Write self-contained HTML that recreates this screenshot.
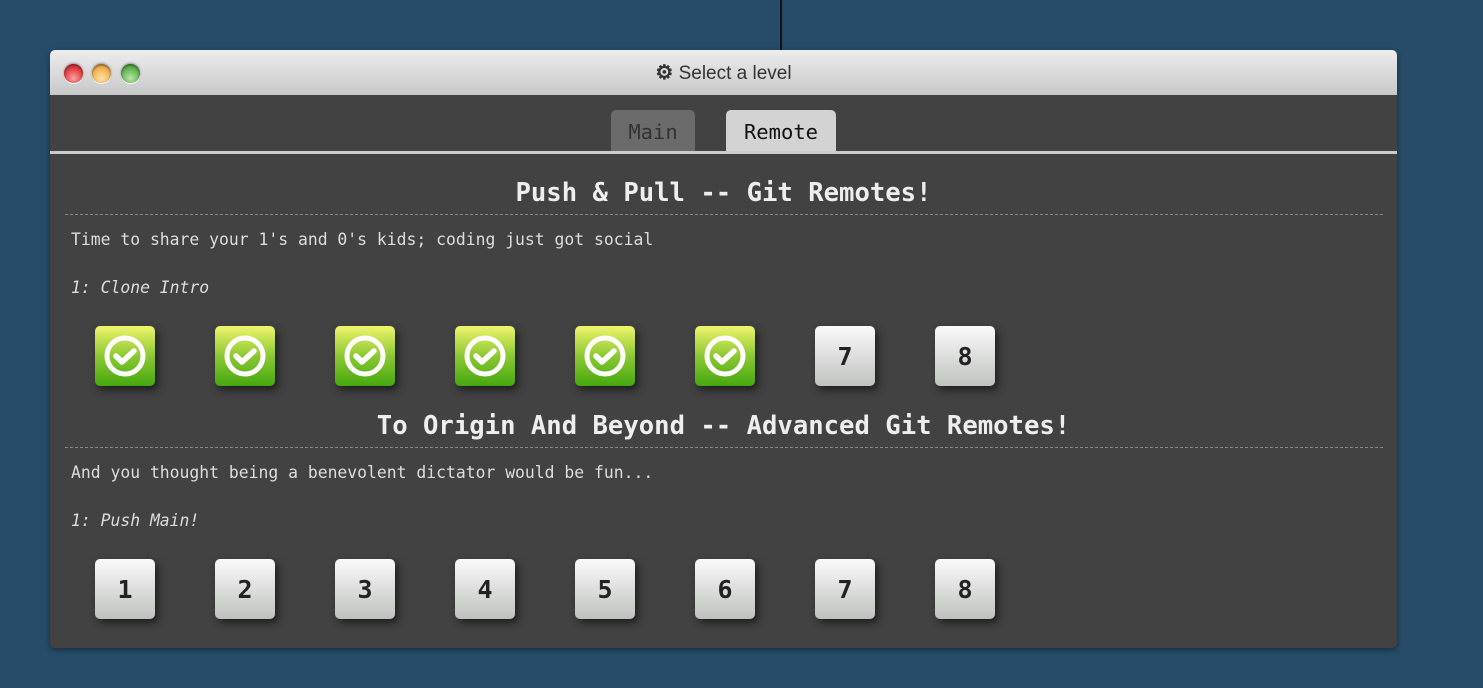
<!DOCTYPE html>
<html><head><style>
body{margin:0;width:1483px;height:688px;background:#264c68;position:relative;overflow:hidden;font-family:"DejaVu Sans Mono","Liberation Mono",monospace}
.vl{position:absolute;left:780px;top:0;width:2px;height:50px;background:#111}
.win{position:absolute;left:50px;top:50px;width:1347px;height:598px;background:#424242;border-radius:5px;box-shadow:0 2px 6px rgba(0,0,0,.4);overflow:hidden}
.tb{height:45px;background:linear-gradient(#ededed,#c8c8c8);position:relative;font-family:"Liberation Sans",sans-serif;font-size:19px;color:#333;text-align:center;line-height:46px}
.dot{position:absolute;top:14px;width:19px;height:19px;border-radius:50%;box-shadow:0 1px 0 #fff,0 -1px 2px rgba(0,0,0,.35),inset 0 1px 2px rgba(0,0,0,.5)}
.tab{position:absolute;top:60px;height:41px;border-radius:5px 5px 0 0;font-size:20.5px;line-height:44px;text-align:center}
.sep{position:absolute;left:0;top:101px;width:100%;height:3px;background:#ccc}
h2{position:absolute;left:0;width:100%;margin:0;text-align:center;color:#eee;font-size:25.6px;font-weight:bold}
.dash{position:absolute;left:15px;width:1318px;border-top:1px dashed #888}
.t{position:absolute;left:21px;color:#ddd;font-size:16.4px}
.i{font-style:italic}
.b{position:absolute;width:60px;height:60px;border-radius:5px;box-shadow:3px 4px 8px rgba(0,0,0,.55);text-align:center;line-height:62px;font-size:25px;font-weight:bold;color:#222;background:linear-gradient(#fafafa,#bfc2bf)}
.g{background:linear-gradient(#eef56a,#8cc833 50%,#45a80e)}
.g svg{margin-top:8px}
</style></head><body>
<div class="vl"></div>
<div class="win">
<div class="tb">
<div class="dot" style="left:14px;background:radial-gradient(circle at 50% 75%,#f9a0a0,#e0383e 60%,#b82a2e)"></div>
<div class="dot" style="left:42px;background:radial-gradient(circle at 50% 75%,#fde0a0,#f0b050 60%,#c8862a)"></div>
<div class="dot" style="left:71px;background:radial-gradient(circle at 50% 75%,#b5e6a8,#5fb14d 60%,#3c8a30)"></div>
<b style="font-size:20px">⚙</b> Select a level</div>
<div class="tab" style="left:561px;width:84px;background:#6b6b6b;color:#333">Main</div>
<div class="tab" style="left:676px;width:110px;background:#d3d3d3;color:#111">Remote</div>
<div class="sep"></div>
<h2 style="top:128px">Push &amp; Pull -- Git Remotes!</h2>
<div class="dash" style="top:164px"></div>
<div class="t" style="top:180px">Time to share your 1's and 0's kids; coding just got social</div>
<div class="t i" style="top:228px">1: Clone Intro</div>
<h2 style="top:361px">To Origin And Beyond -- Advanced Git Remotes!</h2>
<div class="dash" style="top:397px"></div>
<div class="t" style="top:413px">And you thought being a benevolent dictator would be fun...</div>
<div class="t i" style="top:461px">1: Push Main!</div>
</div>
<script>
var w=document.querySelector('.win'),h='';
var ck='<svg width="44" height="44" viewBox="0 0 44 44"><circle cx="22" cy="22" r="18" fill="none" stroke="#fff" stroke-width="5"/><path d="M13 22l6 6 12-11" fill="none" stroke="#fff" stroke-width="5.5" stroke-linecap="round" stroke-linejoin="round"/></svg>';
for(var i=0;i<8;i++){var x=45+120*i;
h+=i<6?'<div class="b g" style="left:'+x+'px;top:276px">'+ck+'</div>':'<div class="b" style="left:'+x+'px;top:276px">'+(i+1)+'</div>';
h+='<div class="b" style="left:'+x+'px;top:509px">'+(i+1)+'</div>';}
w.insertAdjacentHTML('beforeend',h);
</script>
</body></html>
